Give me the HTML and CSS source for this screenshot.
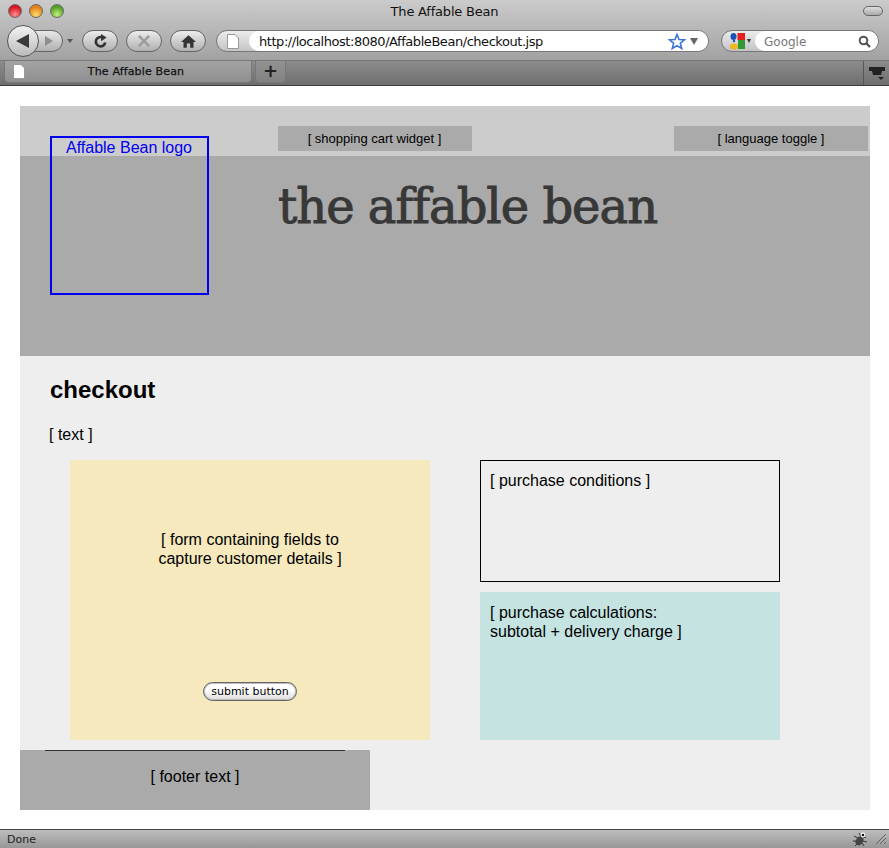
FILE: index.html
```html
<!DOCTYPE html>
<html lang="en">
<head>
<meta charset="utf-8">
<title>The Affable Bean</title>
<link rel="stylesheet" href="styles.css">
</head>
<body>
<div class="browser">
  <div class="chrome">
    <div class="topchrome">
      <div class="titlebar">
        <div class="lights"><span class="light red"></span><span class="light amber"></span><span class="light green"></span></div>
        <div class="wintitle">The Affable Bean</div>
        <span class="pill"></span>
      </div>
      <div class="toolbar">
        <div class="navpair">
          <span class="backbtn"><svg width="14" height="14" viewBox="0 0 14 14"><path d="M0 7 13 0V14Z" fill="#3a3a3a"/></svg></span>
          <span class="fwdbtn"><svg width="10" height="12" viewBox="0 0 10 12"><path d="M9 6 1 1V11Z" fill="#8f8f8f"/></svg></span>
        </div>
        <span class="caret"></span>
        <span class="toolbtn"><svg width="15" height="15" viewBox="0 0 16 16"><path d="M13 9A5 5 0 1 1 9.500 3.400" fill="none" stroke="#333" stroke-width="2.800"/><path d="M8.500 0 14.500 3.800 8.500 7.600Z" fill="#333"/></svg></span>
        <span class="toolbtn"><svg width="12" height="12" viewBox="0 0 14 14"><path d="M1 1 13 13M13 1 1 13" stroke="#9c9c9c" stroke-width="3"/></svg></span>
        <span class="toolbtn"><svg width="15" height="13" viewBox="0 0 18 15"><path d="M9 0 0 8H3V15H7V10H11V15H15V8H18Z" fill="#333"/></svg></span>
        <div class="urlbar">
          <span class="favslot"><svg width="12" height="15" viewBox="0 0 12 15"><path d="M.5.5H8L11.500 4V14.500H.5Z" fill="#fff" stroke="#999"/></svg></span>
          <div class="urlfield">
            <span class="urltext">http://localhost:8080/AffableBean/checkout.jsp</span>
            <svg width="18" height="17" viewBox="0 0 18 17"><path d="M9 1.500 11 6.500 16.500 6.800 12.300 10.300 13.700 15.500 9 12.600 4.300 15.500 5.700 10.300 1.500 6.800 7 6.500Z" fill="#fff" stroke="#3b74d6" stroke-width="1.600"/></svg>
            <span class="urlcaret"></span>
          </div>
        </div>
        <div class="searchbar">
          <span class="engine"><svg width="15" height="17" viewBox="0 0 15 17"><rect x="7.500" width="7.500" height="7" fill="#e3201b"/><path d="M8 7H15V16H8Z" fill="#2f9a35"/><ellipse cx="3.500" cy="3.500" rx="3" ry="3.500" fill="#1a50b8"/><circle cx="4" cy="8" r="1.200" fill="#1a50b8"/><ellipse cx="4" cy="13.500" rx="4" ry="3" fill="#eeb71c"/></svg><span class="enginecaret"></span></span>
          <div class="searchfield">
            <span class="searchtext">Google</span>
            <svg width="13" height="13" viewBox="0 0 13 13"><circle cx="5.500" cy="5.500" r="3.800" fill="none" stroke="#555" stroke-width="2"/><path d="M8.500 8.500 12 12" stroke="#555" stroke-width="2.400"/></svg>
          </div>
        </div>
      </div>
    </div>
    <div class="tabbar">
      <div class="tab">
        <svg width="12" height="15" viewBox="0 0 12 15"><path d="M.5.5H8L11.500 4V14.500H.5Z" fill="#fff" stroke="#999"/></svg>
        <span class="tablabel">The Affable Bean</span>
      </div>
      <div class="newtab">+</div>
      <div class="tabspacer"></div>
      <div class="tablist"><svg width="16" height="14" viewBox="0 0 16 14"><path d="M0 1H16V5H13L12 9H4L3 5H0Z" fill="#222"/><path d="M9 11H15L12 14Z" fill="#222"/></svg></div>
    </div>
  </div>

  <div class="viewport">
    <div id="main" class="wrapper">
      <header class="header">
        <div class="logo">Affable Bean logo</div>
        <div class="widgetbar">
          <div class="widget cart">[ shopping cart widget ]</div>
          <div class="widget lang">[ language toggle ]</div>
        </div>
        <h1 class="brand">the affable bean</h1>
      </header>
      <main class="content">
        <h2 class="pagetitle">checkout</h2>
        <p class="intro">[ text ]</p>
        <div class="columns">
          <section class="formbox">
            <p class="formtext">[ form containing fields to<br>capture customer details ]</p>
            <button class="submit" type="button">submit button</button>
          </section>
          <div class="sidecol">
            <section class="conditions">[ purchase conditions ]</section>
            <section class="calculations">[ purchase calculations:<br>subtotal + delivery charge ]</section>
          </div>
        </div>
        <footer class="footer"><span class="footerrule"></span>[ footer text ]</footer>
      </main>
    </div>
  </div>

  <div class="statusbar">
    <span class="statustext">Done</span>
    <span class="statusicons">
      <svg width="16" height="16" viewBox="0 0 16 16"><path d="M2 5 6 7M1 10 5 10M3 15 6 12M7 2 9 6M14 6 11 7M15 11 11 10M12 15 10 12" stroke="#333"/><ellipse cx="7.500" cy="10" rx="3.600" ry="4.500" fill="#444" transform="rotate(35 7.500 10)"/><circle cx="11" cy="4" r="2.400" fill="#fff"/><circle cx="11" cy="4" r="1.300" fill="#111"/></svg>
      <svg width="12" height="12" viewBox="0 0 12 12"><path d="M1 11 11 1M5 11 11 5M9 11 11 9" stroke="#666"/></svg>
    </span>
  </div>
</div>
</body>
</html>
```

FILE: styles.css
```css
* { box-sizing: border-box; }
html, body { margin: 0; padding: 0; height: 100%; }
body { font-family: "Liberation Sans", Arial, sans-serif; color: #000; background: #fff; overflow: hidden; }
.browser { height: 848px; display: flex; flex-direction: column; }

.chrome { height: 86px; flex: none; display: flex; flex-direction: column; border-bottom: 1px solid #3c3c3c; }
.topchrome { flex: none; background: linear-gradient(#cbcbcb, #a2a2a2); }
.titlebar { height: 22px; display: flex; align-items: center; padding: 0 6px 0 8px; position: relative; }
.lights { display: flex; gap: 7px; }
.light { width: 14px; height: 14px; border-radius: 50%; border: 1px solid #6a6a6a; }
.red { background: radial-gradient(circle at 50% 80%, #ff9090, #d4141f 70%); }
.amber { background: radial-gradient(circle at 50% 80%, #ffdc70, #e27d14 70%); }
.green { background: radial-gradient(circle at 50% 80%, #c4f27a, #4f9e24 70%); }
.wintitle { position: absolute; left: 0; right: 0; text-align: center; font: 13px "DejaVu Sans", sans-serif; color: #111; letter-spacing: -.2px; }
.pill { margin-left: auto; width: 20px; height: 10px; border-radius: 5px; border: 1px solid #666; background: linear-gradient(#ddd, #aaa); }

.toolbar { height: 38px; display: flex; align-items: center; padding: 0 6px 0 7px; }
.navpair { display: flex; align-items: center; width: 57px; height: 32px; position: relative; }
.backbtn { width: 32px; height: 32px; border-radius: 50%; border: 1px solid #555; background: linear-gradient(#f2f2f2, #bbb); display: flex; align-items: center; justify-content: center; position: relative; z-index: 1; }
.fwdbtn { width: 31px; height: 22px; margin-left: -7px; padding-left: 11px; border-radius: 0 11px 11px 0; border: 1px solid #666; background: linear-gradient(#e8e8e8, #b0b0b0); display: flex; align-items: center; }
.caret { width: 0; height: 0; margin: 0 9px 0 3px; border: 3.500px solid transparent; border-top: 4px solid #555; border-bottom: 0; }
.toolbtn { width: 36px; height: 22px; margin-right: 8px; border-radius: 11px; border: 1px solid #666; background: linear-gradient(#ececec, #b0b0b0); display: flex; align-items: center; justify-content: center; }
.urlbar { width: 493px; height: 22px; margin-left: 2px; display: flex; border-radius: 11px; border: 1px solid #777; background: linear-gradient(#ececec, #c4c4c4); }
.favslot { width: 32px; flex: none; display: flex; align-items: center; justify-content: center; }
.urlfield { flex: 1; display: flex; align-items: center; background: #fff; border-radius: 11px; padding: 0 10px 0 10px; gap: 4px; }
.urltext { flex: 1; font: 13px "DejaVu Sans", sans-serif; letter-spacing: -.45px; color: #111; white-space: nowrap; }
.urlcaret { width: 0; height: 0; border: 4.500px solid transparent; border-top: 7px solid #666; border-bottom: 0; }
.searchbar { width: 158px; height: 22px; margin-left: 12px; display: flex; border-radius: 11px; border: 1px solid #777; background: linear-gradient(#ececec, #c4c4c4); }
.engine { width: 33px; flex: none; display: flex; align-items: center; padding-left: 8px; gap: 2px; }
.enginecaret { width: 0; height: 0; border: 2.500px solid transparent; border-top: 4px solid #333; border-bottom: 0; }
.searchfield { flex: 1; display: flex; align-items: center; justify-content: space-between; background: #fff; border-radius: 11px; padding: 1px 7px 0 9px; }
.searchtext { font: 12px "DejaVu Sans", sans-serif; color: #777; }

.tabbar { flex: 1; display: flex; align-items: stretch; padding-left: 4px; background: linear-gradient(#8c8c8c, #6e6e6e); border-top: 1px solid #777; }
.tab { width: 248px; margin-bottom: 2px; display: flex; align-items: center; padding-left: 8px; background: linear-gradient(#a3a3a3, #8f8f8f); border: 1px solid #777; border-top: 0; border-radius: 0 0 5px 5px; }
.tablabel { flex: 1; text-align: center; font: 11px "DejaVu Sans", sans-serif; letter-spacing: .15px; -webkit-text-stroke: .25px #111; color: #111; padding-right: 4px; }
.newtab { width: 31px; margin: 0 0 2px 3px; text-align: center; font: bold 18px/20px "DejaVu Sans", sans-serif; color: #222; background: linear-gradient(#929292, #828282); border: 1px solid #777; border-top: 0; border-radius: 0 0 5px 5px; }
.tabspacer { flex: 1; }
.tablist { width: 26px; display: flex; align-items: center; justify-content: center; border-left: 1px solid #555; }

.viewport { flex: 1; padding: 20px 19px 19px 20px; background: #fff; min-height: 0; }
.wrapper { width: 850px; height: 704px; display: flex; flex-direction: column; background: #eee; }

.header { height: 250px; flex: none; position: relative; background: #aaa; }
.widgetbar { height: 50px; display: flex; justify-content: space-between; padding: 20px 2px 0 258px; background: #ccc; }
.widget { height: 25px; background: #aaa; font-size: 13px; line-height: 25px; text-align: center; }
.cart { width: 194px; padding-right: 1px; }
.lang { width: 194px; }
.logo { position: absolute; z-index: 1; left: 30px; top: 30px; width: 159px; height: 159px; padding: 1px 1px 0 0; border: 2px solid #0000f0; color: #0000f0; font-size: 16px; line-height: 18px; text-align: center; }
.brand { margin: 22px 0 0 258px; font: normal 48px/56px "DejaVu Serif", serif; letter-spacing: -1px; color: #383838; -webkit-text-stroke: 1px #383838; white-space: nowrap; }

.content { flex: 1; display: flex; flex-direction: column; }
.pagetitle { margin: 20px 0 0 30px; font-size: 24px; line-height: 28px; font-weight: bold; }
.intro { margin: 22px 0 0 29px; font-size: 16px; line-height: 18px; }
.columns { display: flex; gap: 50px; margin: 16px 0 0 50px; height: 280px; }
.formbox { width: 360px; display: flex; flex-direction: column; align-items: center; background: #f5e9bd; padding: 70px 0 0 0; font-size: 16px; line-height: 19px; text-align: center; }
.formtext { margin: 0; }
.submit { margin: 114px 0 0 0; width: 94px; height: 19px; padding: 0; font: 11px/17px "DejaVu Sans", sans-serif; color: #000; border: 1px solid #666; border-radius: 10px; background: linear-gradient(#fff 40%, #dcdcdc); box-shadow: 0 0 0 1px #bbb inset; }
.sidecol { width: 300px; display: flex; flex-direction: column; gap: 10px; font-size: 16px; line-height: 19px; }
.conditions { height: 122px; border: 1px solid #000; padding: 10px 9px; }
.calculations { flex: 1; background: #c4e3e1; padding: 11px 10px; }
.footer { position: relative; width: 350px; height: 60px; margin-top: 10px; background: #aaa; font-size: 16px; line-height: 54px; text-align: center; }
.footerrule { position: absolute; left: 25px; top: 0; width: 300px; height: 1px; background: #333; }

.statusbar { height: 19px; flex: none; display: flex; align-items: center; justify-content: space-between; padding: 0 2px 0 7px; border-top: 1px solid #444; background: linear-gradient(#bdbdbd, #979797); }
.statustext { font: 11px "DejaVu Sans", sans-serif; color: #222; }
.statusicons { display: flex; align-items: center; gap: 7px; }
```
